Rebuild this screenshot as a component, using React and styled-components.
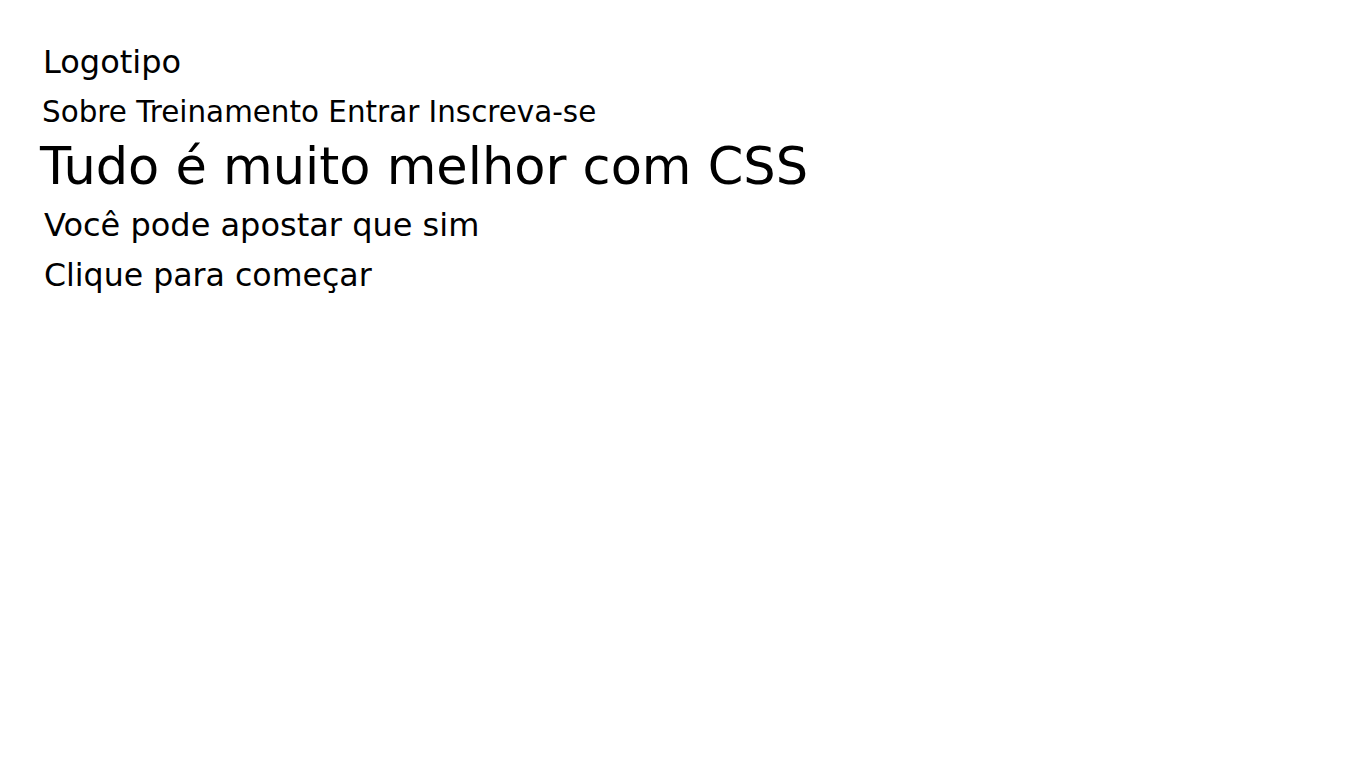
import React from "react";
import styled, { createGlobalStyle } from "styled-components";

const Global = createGlobalStyle`
  body { margin: 0; background: #fff; font-family: "DejaVu Sans", sans-serif; color: #000; }
`;

const Page = styled.div`
  padding: 43px 40px;
  display: flex;
  flex-direction: column;
`;

const Header = styled.header`
  display: flex;
  flex-direction: column;
  gap: 14px;
`;

const Logo = styled.div`
  padding-left: 3px;
  font-size: 32px;
`;

const Nav = styled.nav`
  padding-left: 2px;
  font-size: 29.4px;
`;

const NavLink = styled.span`
  color: #000;
`;

const Title = styled.h1`
  margin: 8px 0 0;
  font-size: 51px;
  font-weight: normal;
`;

const Sub = styled.p`
  margin: 10px 0 0;
  padding-left: 4px;
  font-size: 32px;
`;

const Cta = styled.div`
  margin-top: 13px;
  padding-left: 4px;
  font-size: 31.6px;
`;

export default function App() {
  return (
    <>
      <Global />
      <Page>
        <Header>
          <Logo>Logotipo</Logo>
          <Nav>
            <NavLink>Sobre</NavLink> <NavLink>Treinamento</NavLink>{" "}
            <NavLink>Entrar</NavLink> <NavLink>Inscreva-se</NavLink>
          </Nav>
        </Header>
        <Title>Tudo é muito melhor com CSS</Title>
        <Sub>Você pode apostar que sim</Sub>
        <Cta>Clique para começar</Cta>
      </Page>
    </>
  );
}
